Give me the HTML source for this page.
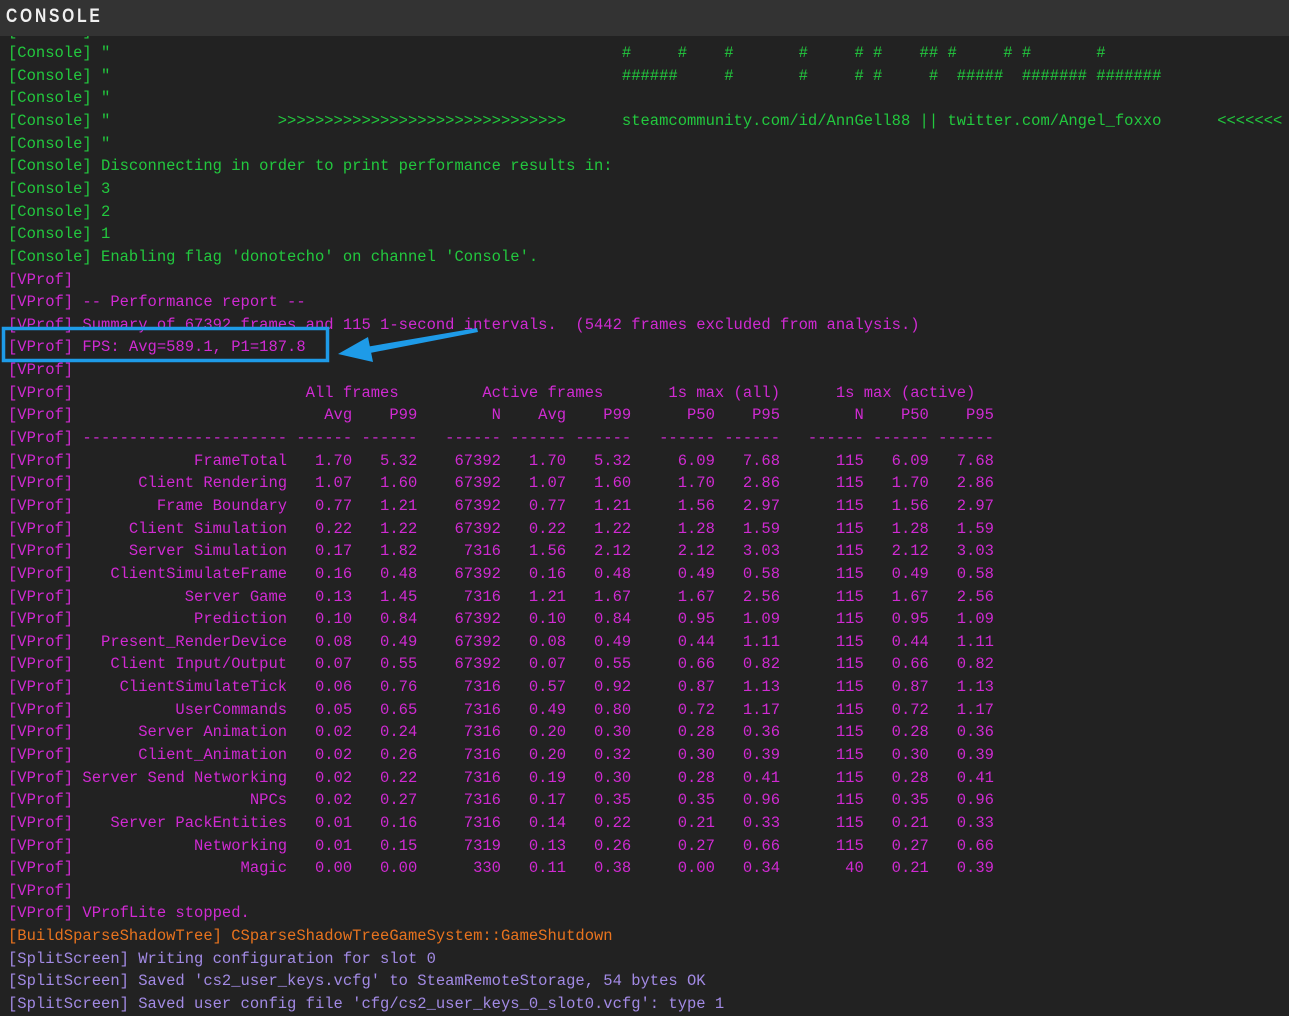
<!DOCTYPE html>
<html><head><meta charset="utf-8"><style>
html,body{margin:0;padding:0;}
body{width:1289px;height:1010px;background:#222222;overflow:hidden;position:relative;font-family:"Liberation Mono","DejaVu Sans Mono",monospace;}
.hdr{position:absolute;left:0;top:0;width:1289px;height:36px;background:#333333;z-index:2;}
.hdr span{position:absolute;left:6px;top:6px;font-family:"Liberation Sans","DejaVu Sans",sans-serif;font-weight:bold;font-size:19px;letter-spacing:3.4px;color:#f0f0f0;display:inline-block;transform:scaleX(0.82);transform-origin:0 0;}
pre{position:absolute;left:8px;top:19.5px;margin:0;font-size:15.5px;line-height:22.64px;white-space:pre;}
.g{color:#22c83e}.m{color:#d02ad2}.o{color:#e8731e}.p{color:#a28ae4}
svg{position:absolute;left:0;top:0;z-index:3}
</style></head><body>
<div class="hdr"><span>CONSOLE</span></div>
<pre><span class="g">[Console] "
[Console] "                                                       #     #    #       #     # #    ## #     # #       #
[Console] "                                                       ######     #       #     # #     #  #####  ####### #######
[Console] "
[Console] "                  &gt;&gt;&gt;&gt;&gt;&gt;&gt;&gt;&gt;&gt;&gt;&gt;&gt;&gt;&gt;&gt;&gt;&gt;&gt;&gt;&gt;&gt;&gt;&gt;&gt;&gt;&gt;&gt;&gt;&gt;&gt;      steamcommunity.com/id/AnnGell88 || twitter.com/Angel_foxxo      &lt;&lt;&lt;&lt;&lt;&lt;&lt;
[Console] "
[Console] Disconnecting in order to print performance results in:
[Console] 3
[Console] 2
[Console] 1
[Console] Enabling flag 'donotecho' on channel 'Console'.</span>
<span class="m">[VProf]
[VProf] -- Performance report --
[VProf] Summary of 67392 frames and 115 1-second intervals.  (5442 frames excluded from analysis.)
[VProf] FPS: Avg=589.1, P1=187.8
[VProf]
[VProf]                         All frames         Active frames       1s max (all)      1s max (active)
[VProf]                           Avg    P99        N    Avg    P99      P50    P95        N    P50    P95
[VProf] ---------------------- ------ ------   ------ ------ ------   ------ ------   ------ ------ ------
[VProf]             FrameTotal   1.70   5.32    67392   1.70   5.32     6.09   7.68      115   6.09   7.68
[VProf]       Client Rendering   1.07   1.60    67392   1.07   1.60     1.70   2.86      115   1.70   2.86
[VProf]         Frame Boundary   0.77   1.21    67392   0.77   1.21     1.56   2.97      115   1.56   2.97
[VProf]      Client Simulation   0.22   1.22    67392   0.22   1.22     1.28   1.59      115   1.28   1.59
[VProf]      Server Simulation   0.17   1.82     7316   1.56   2.12     2.12   3.03      115   2.12   3.03
[VProf]    ClientSimulateFrame   0.16   0.48    67392   0.16   0.48     0.49   0.58      115   0.49   0.58
[VProf]            Server Game   0.13   1.45     7316   1.21   1.67     1.67   2.56      115   1.67   2.56
[VProf]             Prediction   0.10   0.84    67392   0.10   0.84     0.95   1.09      115   0.95   1.09
[VProf]   Present_RenderDevice   0.08   0.49    67392   0.08   0.49     0.44   1.11      115   0.44   1.11
[VProf]    Client Input/Output   0.07   0.55    67392   0.07   0.55     0.66   0.82      115   0.66   0.82
[VProf]     ClientSimulateTick   0.06   0.76     7316   0.57   0.92     0.87   1.13      115   0.87   1.13
[VProf]           UserCommands   0.05   0.65     7316   0.49   0.80     0.72   1.17      115   0.72   1.17
[VProf]       Server Animation   0.02   0.24     7316   0.20   0.30     0.28   0.36      115   0.28   0.36
[VProf]       Client_Animation   0.02   0.26     7316   0.20   0.32     0.30   0.39      115   0.30   0.39
[VProf] Server Send Networking   0.02   0.22     7316   0.19   0.30     0.28   0.41      115   0.28   0.41
[VProf]                   NPCs   0.02   0.27     7316   0.17   0.35     0.35   0.96      115   0.35   0.96
[VProf]    Server PackEntities   0.01   0.16     7316   0.14   0.22     0.21   0.33      115   0.21   0.33
[VProf]             Networking   0.01   0.15     7319   0.13   0.26     0.27   0.66      115   0.27   0.66
[VProf]                  Magic   0.00   0.00      330   0.11   0.38     0.00   0.34       40   0.21   0.39
[VProf]
[VProf] VProfLite stopped.</span>
<span class="o">[BuildSparseShadowTree] CSparseShadowTreeGameSystem::GameShutdown</span>
<span class="p">[SplitScreen] Writing configuration for slot 0
[SplitScreen] Saved 'cs2_user_keys.vcfg' to SteamRemoteStorage, 54 bytes OK
[SplitScreen] Saved user config file 'cfg/cs2_user_keys_0_slot0.vcfg': type 1</span></pre>
<svg width="1289" height="1010">
<rect x="3.5" y="328.5" width="324" height="32" fill="none" stroke="#1e9be8" stroke-width="3.5"/>
<polygon points="477,328 478,332 370,353 366,347" fill="#1e9be8"/>
<polygon points="338,354 368,337 373,362" fill="#1e9be8"/>
</svg>
</body></html>
